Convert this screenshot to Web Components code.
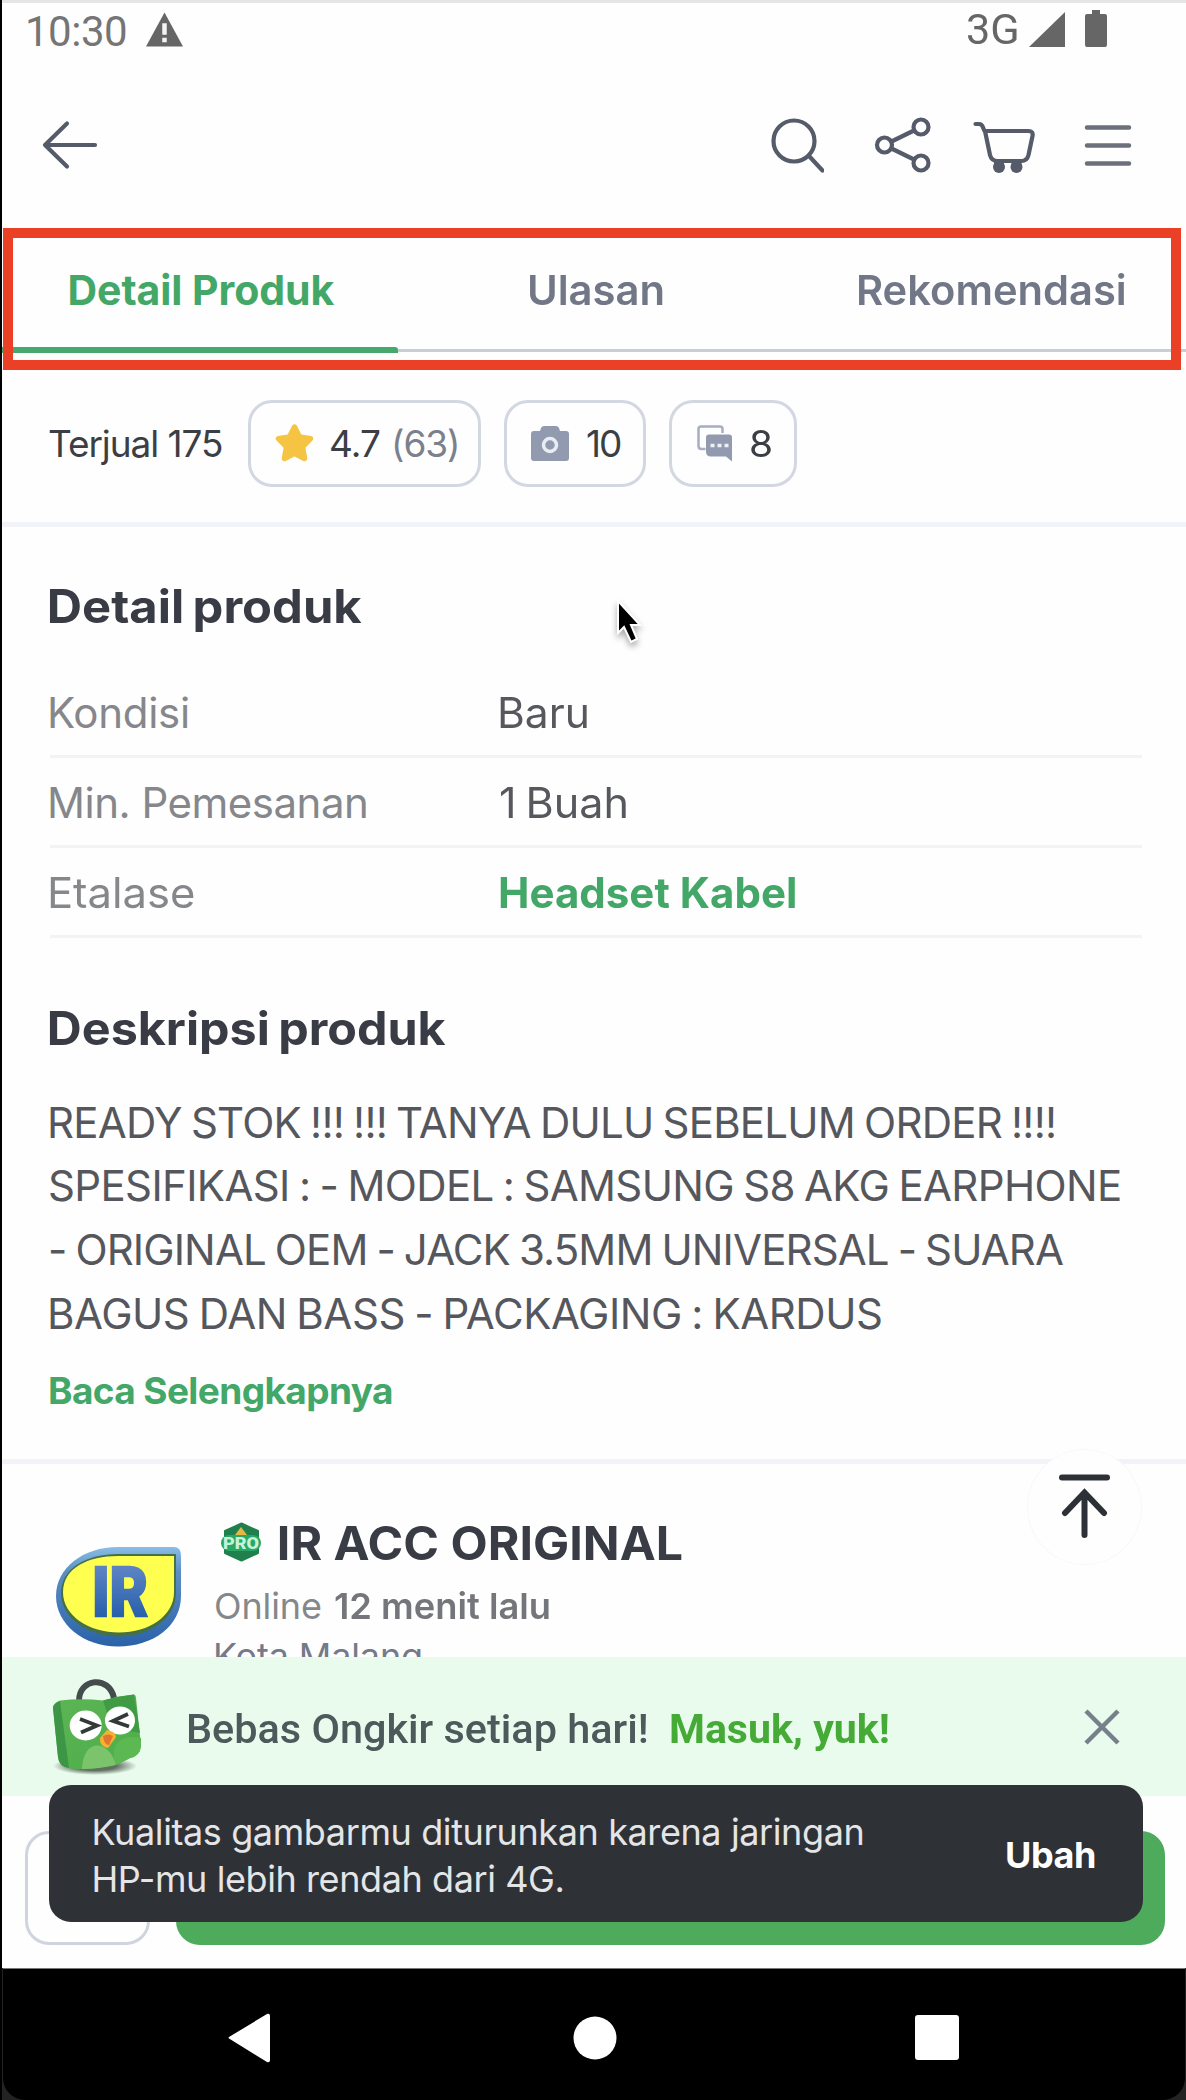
<!DOCTYPE html>
<html lang="id">
<head>
<meta charset="utf-8">
<title>Detail Produk</title>
<style>
html,body{margin:0;padding:0}
body{width:1186px;height:2100px;overflow:hidden;background:#fefefe;font-family:Inter,"Liberation Sans",sans-serif}
</style>
</head>
<body>
<product-screen></product-screen>
<script>
const define = (name, html, setup) => {
  const tpl = document.createElement('template');
  tpl.innerHTML = html;
  customElements.define(name, class extends HTMLElement {
    connectedCallback() {
      if (this.shadowRoot) return;
      this.attachShadow({mode: 'open'}).append(tpl.content.cloneNode(true));
      if (setup) setup(this, this.shadowRoot);
    }
  });
};

/* One line of text whose ink spans exactly `w` pixels: tightened by letter
   spacing when too wide, stretched when too narrow. `ws` is the word spacing. */
const ctx = document.createElement('canvas').getContext('2d');
define('fit-text', `<style>:host{display:block;white-space:pre;flex:none}span{display:block;width:max-content}</style><span><slot></slot></span>`, (el, root) => {
  const cs = getComputedStyle(el), t = el.textContent, w = +el.getAttribute('w'), ws = +(el.getAttribute('ws') || 0);
  ctx.font = `${cs.fontWeight} ${cs.fontSize} ${cs.fontFamily}`;
  const m = ctx.measureText(t), left = m.actualBoundingBoxLeft;
  const ink = left + m.actualBoundingBoxRight + ws * (t.split(' ').length - 1);
  const s = root.querySelector('span').style;
  if (ws) s.wordSpacing = ws + 'px';
  if (ink > w && t.length > 1) s.letterSpacing = (w - ink) / (t.length - 1) + 'px';
  else { s.transformOrigin = -left + 'px 50%'; s.transform = `scaleX(${w / ink})`; }
  s.marginLeft = left + 'px';
  el.style.width = w + 'px';
});

define('status-bar', `<style>
:host{display:flex;align-items:center;height:62px;padding:0 79px 0 26px;box-sizing:border-box;font:400 42px/62px Roboto,sans-serif;color:#757575}
svg{display:block;flex:none}
.sp{flex:1}
</style>
<fit-text w="98" style="margin-top:2px">10:30</fit-text>
<svg style="margin:-4px 0 0 20px" width="37" height="35" viewBox="0 0 38 35"><path d="M19 0L38 35H0Z" fill="#666"/><path d="M16.700 11h4.600v12h-4.600zM16.700 26h4.600v4.500h-4.600z" fill="#f4f4f4"/></svg>
<div class="sp"></div>
<fit-text w="50" style="margin-top:-2px;color:#666">3G</fit-text>
<svg style="margin:-4px 0 0 12px" width="36" height="35" viewBox="0 0 36 35"><path d="M36 0V35H0Z" fill="#666"/></svg>
<svg style="margin:-5px 0 0 20px" width="22" height="37" viewBox="0 0 22 37"><path d="M7 0h8v4h5q2 0 2 2v29q0 2-2 2H2q-2 0-2-2V6q0-2 2-2h5z" fill="#666"/></svg>`);

define('tool-bar', `<style>
:host{display:flex;align-items:center;height:166px;padding:0 53px 0 39px;box-sizing:border-box}
svg{display:block;fill:none;stroke:#555b69;stroke-width:4.200;stroke-linecap:round;stroke-linejoin:round}
.sp{flex:1}
</style>
<svg width="60" height="60" viewBox="0 0 60 60"><path d="M54 30H4M26 8.500L4 30l22 21.500"/></svg>
<div class="sp"></div>
<svg width="60" height="60" viewBox="764 115 60 60" style="margin-right:48px"><circle cx="794" cy="141" r="20.500"/><path d="M809 156l13.500 14.500"/></svg>
<svg width="60" height="60" viewBox="872 115 60 60" style="margin-right:39px"><circle cx="884.500" cy="145" r="7.500"/><circle cx="921" cy="127" r="7.500"/><circle cx="921" cy="163" r="7.500"/><path d="M891.500 141.500L914 130.500M891.500 148.500L914 159.500"/></svg>
<svg width="66" height="60" viewBox="971 115 66 60" style="margin-right:46px"><path d="M975.500 124h3.500q3 0 4 3.500l1.500 3.500h44q5 0 4 5l-4 19q-1.500 6-7 6h-24q-6 0-7.500-6l-5-24"/><g fill="#555b69" stroke="none"><circle cx="999" cy="167" r="6"/><circle cx="1016.500" cy="167" r="6"/><path d="M994 161h10v6h-10zM1011.500 161h10v6h-10z"/></g></svg>
<svg width="50" height="60" viewBox="1083 115 50 60" style="stroke:#6b707c;stroke-width:4.500"><path d="M1087 127.500h42M1087 145.500h42M1087 163.500h42"/></svg>`);

define('tab-strip', `<style>
:host{display:block;position:relative;height:125px;font-weight:600;font-size:41px;line-height:124px;color:#717787}
.row{display:grid;grid-template-columns:396px 392px 396px;justify-items:center;padding-left:2px;height:119px}
.line{height:6px;display:flex;align-items:center}
.on{width:396px;height:6px;background:#46a86c;border-radius:0 3px 0 0}
.off{flex:1;height:3px;background:#c8cdd8}
.frame{position:absolute;left:1px;top:0;width:1178px;height:142px;box-sizing:border-box;border:10px solid #ea4025;z-index:3}
</style>
<div class="row"><fit-text w="265" style="color:#43a768;font-weight:700">Detail Produk</fit-text><fit-text w="133">Ulasan</fit-text><fit-text w="266" style="margin-left:4px">Rekomendasi</fit-text></div>
<div class="line"><div class="on"></div><div class="off"></div></div>
<div class="frame"></div>`);

define('stat-chip', `<style>
:host{display:flex;align-items:center;box-sizing:border-box;height:87px;border:3.500px solid #d3d7e2;border-radius:24px;flex:none}
</style><slot></slot>`);

define('stat-row', `<style>
:host{display:flex;align-items:flex-start;padding:47px 0 0 47px;height:169px;box-sizing:border-box;font-size:37px;line-height:82px;color:#3c3e45}
svg{display:block;flex:none}
</style>
<fit-text w="173" style="line-height:88px">Terjual 175</fit-text>
<stat-chip style="width:233px;margin-left:26px;padding-left:24px">
<svg width="39" height="39" viewBox="0 0 39 39"><path d="M19.500 3l5 10 11 1.700-8 8.200 2 11.600-10-5.100-10 5.100 2-11.600-8-8.200L14.500 13z" fill="#f6c443" stroke="#f6c443" stroke-width="5.500" stroke-linejoin="round"/></svg>
<fit-text w="49" style="margin-left:17px">4.7</fit-text><fit-text w="63" style="margin-left:14px;color:#7b808d">(63)</fit-text></stat-chip>
<stat-chip style="width:142px;margin-left:23px;padding-left:24px">
<svg width="38" height="36" viewBox="0 0 38 36"><path d="M13 0h12q2 0 3 2l1 3h6q3 0 3 3v24q0 3-3 3H3q-3 0-3-3V8q0-3 3-3h6l1-3q1-2 3-2z" fill="#919aae"/><circle cx="19" cy="19" r="6.500" fill="none" stroke="#e9ecf3" stroke-width="3.500"/></svg>
<fit-text w="34" style="margin-left:18px">10</fit-text></stat-chip>
<stat-chip style="width:128px;margin-left:23px;padding-left:25px">
<svg width="36" height="37" viewBox="0 0 36 37"><path d="M25.500 8V4Q25.500 1.500 23 1.500H4Q1.500 1.500 1.500 4v17q0 3 3 3h4" fill="none" stroke="#a7aebd" stroke-width="2.500"/><path d="M12 9.500h20q3 0 3 3v24l-6-5H14q-5 0-5-5V12.500q0-3 3-3z" fill="#919aae"/><path d="M13.500 20.500h4m3 0h4m3 0h4" stroke="#eef0f5" stroke-width="3.500"/></svg>
<fit-text w="20" style="margin-left:18px">8</fit-text></stat-chip>`);

define('spec-row', `<style>
:host{display:grid;grid-template-columns:450px auto;height:90px;box-sizing:border-box;border-bottom:3px solid #f2f3f7;line-height:90px;font-size:42px;color:#85878b}
::slotted(:last-child){color:#56585e}
</style><slot></slot>`);

define('store-card', `<style>
:host{display:flex;height:194px;padding-left:54px}
svg{display:block;flex:none}
.info{padding-left:34px}
.name{display:flex;align-items:center;height:56px;margin-top:51px;font-weight:700;font-size:46px;line-height:56px;color:#393c44}
.seen{display:flex;height:48px;margin-top:11px;font-size:36px;line-height:48px;color:#85878b}
</style>
<svg width="126" height="104" viewBox="0 0 126 104" style="margin-top:82px">
<defs><linearGradient id="b" x2="0" y2="1"><stop stop-color="#8abde6"/><stop offset=".25" stop-color="#5b8fc4"/><stop offset="1" stop-color="#2a62a8"/></linearGradient><linearGradient id="t" x2="0" y2="1"><stop offset=".2" stop-color="#5b83c4"/><stop offset=".9" stop-color="#1f5aa5"/></linearGradient></defs>
<path d="M62 1H118Q125 1 125 10V50C125 80 97 100.500 62 100.500S0 78 0 50 27 1 62 1Z" fill="url(#b)"/>
<path d="M62 8H120V47C120 72 94 90.500 63 90.500S5 72 5 47 31 8 62 8Z" fill="#456f45"/>
<path d="M62 10H118V46C118 70 93 86.500 63 86.500S7 70 7 46 32 10 62 10Z" fill="#ffff50"/>
<text x="36" y="69.500" textLength="56" lengthAdjust="spacingAndGlyphs" font-family="Roboto" font-weight="900" font-size="68" fill="url(#t)" stroke="url(#t)" stroke-width="2.500">IR</text></svg>
<div class="info">
<div class="name"><svg width="44" height="40" viewBox="0 0 44 40" style="margin:-3px 0 0 4px"><path d="M21.500 1.500L38 9V31L21.500 38.500 5 31V9Z" fill="#20804d" stroke="#20804d" stroke-width="2" stroke-linejoin="round"/><path d="M21 5l6 8-6 3-6-3z" fill="#e6b744"/><rect x="1" y="13" width="40" height="16" rx="8" fill="#28a765"/><text x="3" y="27" textLength="36" lengthAdjust="spacingAndGlyphs" font-family="Roboto" font-weight="900" font-size="16" fill="#c4f3d9">PRO</text></svg>
<fit-text w="402" style="margin-left:16px">IR ACC ORIGINAL</fit-text></div>
<div class="seen"><fit-text w="105">Online</fit-text><fit-text w="214" style="margin-left:14px;font-weight:600;color:#74767b">12 menit lalu</fit-text></div>
<fit-text w="205" style="margin-top:2px;font-size:36px;line-height:48px;color:#747a89">Kota Malang</fit-text>
</div>`);

define('promo-banner', `<style>
:host{display:flex;align-items:center;height:139px;padding:0 66px 0 48px;background:#e8fbec;font:500 40px/60px Roboto,sans-serif;color:#4c5a5b;box-sizing:border-box;flex:none}
svg{display:block;flex:none}.sp{flex:1}fit-text{padding-top:6px}
</style>
<svg width="94" height="98" viewBox="0 0 94 98">
<defs><linearGradient id="g" x2="1" y2="1"><stop stop-color="#5db555"/><stop offset="1" stop-color="#4cad49"/></linearGradient><radialGradient id="s"><stop offset=".5" stop-color="#5f6f60"/><stop offset="1" stop-color="#5f6f60" stop-opacity="0"/></radialGradient></defs>
<ellipse cx="45" cy="88" rx="42" ry="9" fill="url(#s)"/>
<path d="M29 23C29 0 59-3 64 20" fill="none" stroke="#444d4b" stroke-width="6"/>
<path d="M3 30Q3 25 10 22.500 32 20 53 22.500 68 18 84 16.500 86 17 86 20L91 68Q90 78 80 80 66 89 37 91 24 92 15 89 9 87 8 79Z" fill="url(#g)"/>
<path d="M3 30Q3 26 10 23L19 90Q9 89 8 79Z" fill="#3c9645"/><path d="M53 22.500Q68 18 84 16.500L90 55 62 50Z" fill="#3f9c44"/>
<path d="M32 91C33 60 59 61 66 87Q48 91 32 91Z" fill="#7cc46c"/>
<path d="M66 87C58 64 74 56 91 60V68Q90 78 80 80Z" fill="#5bb853"/>
<ellipse cx="35.700" cy="47.500" rx="16" ry="15" fill="#fff"/><ellipse cx="70" cy="42.500" rx="15" ry="14" fill="#fff"/>
<path d="M30 41l17 6.500-16 7M78 36l-15 7 16 5.500" fill="none" stroke="#343a38" stroke-width="3.800"/>
<path d="M57 52Q66 54 66 59L58 70Q49 68 50 60Z" fill="#f7b130"/><path d="M53 58q5-3 10 0l-4 9q-5 0-6-9z" fill="#e2762f"/></svg>
<fit-text w="459" style="margin-left:44px">Bebas Ongkir setiap hari!</fit-text>
<fit-text w="217" style="margin-left:24px;color:#45aa36;font-weight:700">Masuk, yuk!</fit-text>
<div class="sp"></div>
<svg width="36" height="36" viewBox="0 0 36 36"><path d="M2 2l32 32M34 2L2 34" stroke="#75808a" stroke-width="4.500"/></svg>`);

define('action-bar', `<style>
:host{display:flex;height:172px;box-sizing:border-box;padding:35px 21px 23px 23px;gap:26px;flex:none}
.chat{width:125px;box-sizing:border-box;border:3px solid #d0d4df;border-radius:24px}
.buy{flex:1;background:#4dab5b;border-radius:24px}
</style><div class="chat"></div><div class="buy"></div>`);

define('nav-bar', `<style>
:host{display:block;height:132px;background:#232323;flex:none}
.in{display:flex;align-items:center;height:132px;padding:6px 0 0 225px;box-sizing:border-box;background:#000;border-top:1px solid #777;border-radius:0 0 22px 22px;margin:0 1px}
svg{display:block;fill:#fff}
</style><div class="in">
<svg width="43" height="50" viewBox="0 0 43 50"><path d="M1 25.500Q0 25 1 24L39 1q3-1 3 2v44q0 3-3 2z"/></svg>
<svg style="margin-left:302px" width="44" height="44"><circle cx="22" cy="22" r="21.500"/></svg>
<svg style="margin-left:298px" width="44" height="45"><rect width="44" height="45" rx="3"/></svg></div>`);

define('snack-bar', `<style>
:host{position:absolute;left:46.500px;top:1785px;width:1094.500px;height:137px;box-sizing:border-box;padding:24px 48px 0 46px;display:flex;background:#2e3136;border-radius:22px;font-size:36px;line-height:46.500px;color:#e4e5e7}
.sp{flex:1}
</style>
<div><fit-text w="768">Kualitas gambarmu diturunkan karena jaringan</fit-text><fit-text w="468">HP-mu lebih rendah dari 4G.</fit-text></div>
<div class="sp"></div>
<fit-text w="88" style="font-weight:700;color:#fff;margin-top:23px">Ubah</fit-text>`);

define('to-top', `<style>
:host{position:absolute;left:1025px;top:1449px;width:115px;height:116px;box-sizing:border-box;border-radius:50%;background:#fefefe;border:1px solid #f8f8f9}
svg{display:block;margin:-1px}
</style><svg width="115" height="116" viewBox="0 0 115 116" fill="none" stroke="#2d3036" stroke-width="6" stroke-linecap="round"><path d="M35 28.500h45M38 64l19.500-20.500L77 64M57.500 45v41"/></svg>`);

define('mouse-pointer', `<style>:host{position:absolute;left:612px;top:597px;filter:drop-shadow(0 4px 3px #0005)}svg{display:block}</style>
<svg width="32" height="48" viewBox="0 0 32 48"><path d="M4 4V36l6-6 7 15 6-3-6-14h9z" fill="#000" stroke="#fff" stroke-width="2"/></svg>`);

define('product-screen', `<style>
:host{display:flex;flex-direction:column;position:relative;width:1186px;height:2100px;box-sizing:border-box;border-left:2px solid #000;background:#fefefe;overflow:hidden}
.view{height:1657px;overflow:hidden;flex:none;box-shadow:inset 0 3px 0 #e5e5e5}
hr{margin:0;border:0;height:5px;background:#f1f3f8}
section{padding:51px 44px 0 48px;height:932px;box-sizing:border-box}
h2{margin:0;font-weight:700;font-size:46px;line-height:56px;color:#393c44}
.specs{padding-top:34px}
.desc{padding-top:35px;font-size:42px;line-height:63.800px;color:#55575d}
.more{margin-top:21px;font-weight:700;font-size:37px;line-height:48px;color:#43a768}
</style>
<div class="view">
<status-bar></status-bar><tool-bar></tool-bar><tab-strip></tab-strip><stat-row></stat-row><hr>
<section>
<h2><fit-text w="312" ws="-3">Detail produk</fit-text></h2>
<div class="specs">
<spec-row><fit-text w="138">Kondisi</fit-text><fit-text w="87">Baru</fit-text></spec-row>
<spec-row><fit-text w="316">Min. Pemesanan</fit-text><fit-text w="126" ws="-3">1 Buah</fit-text></spec-row>
<spec-row><fit-text w="144">Etalase</fit-text><fit-text w="295" style="font-weight:700;color:#43a768">Headset Kabel</fit-text></spec-row>
</div>
<h2 style="margin-top:61.500px"><fit-text w="396" ws="-3">Deskripsi produk</fit-text></h2>
<div class="desc"><fit-text w="1004" ws="-2">READY STOK !!! !!! TANYA DULU SEBELUM ORDER !!!!</fit-text><fit-text w="1070" ws="-2">SPESIFIKASI : - MODEL : SAMSUNG S8 AKG EARPHONE</fit-text><fit-text w="1013" ws="-2">- ORIGINAL OEM - JACK 3.5MM UNIVERSAL - SUARA</fit-text><fit-text w="831" ws="-2">BAGUS DAN BASS - PACKAGING : KARDUS</fit-text></div>
<div class="more"><fit-text w="342">Baca Selengkapnya</fit-text></div>
</section>
<hr>
<store-card></store-card>
</div>
<promo-banner></promo-banner>
<action-bar></action-bar>
<nav-bar></nav-bar>
<mouse-pointer></mouse-pointer><to-top></to-top><snack-bar></snack-bar>`);
</script>
</body>
</html>
